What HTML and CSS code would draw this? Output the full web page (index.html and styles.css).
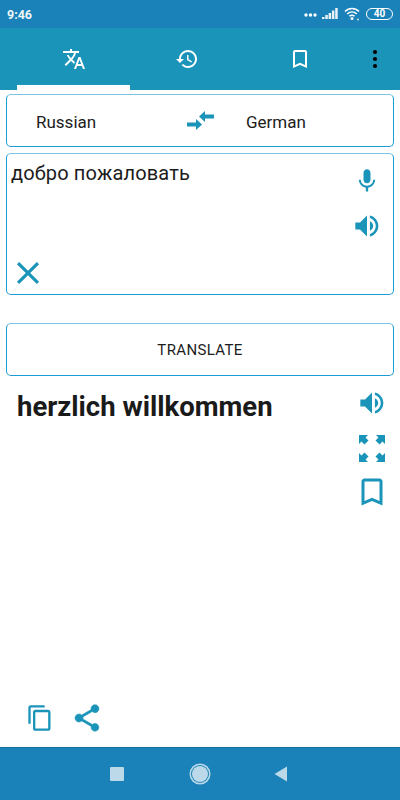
FILE: index.html
```html
<!DOCTYPE html>
<html lang="en">
<head>
<meta charset="utf-8">
<title>Translator</title>
<link rel="stylesheet" href="styles.css">
</head>
<body>
<div class="app">
  <div class="status">
    <span class="time">9:46</span>
    <div class="status-icons">
      <svg class="dots" width="13" height="4" viewBox="0 0 13 4"><circle cx="2" cy="2" r="1.7"/><circle cx="6.5" cy="2" r="1.7"/><circle cx="11" cy="2" r="1.7"/></svg>
      <svg class="signal" width="16" height="12" viewBox="0 0 16 12"><rect x="0" y="9" width="2.500" height="2"/><rect x="3.300" y="7" width="2.500" height="4"/><rect x="6.600" y="5" width="2.500" height="6"/><rect x="9.900" y="2.500" width="2.500" height="8.500"/><rect x="13.200" y="0" width="2.500" height="11"/></svg>
      <svg class="wifi" width="16" height="14" viewBox="0 0 16 14"><path d="M1 4.5C5 .5 11 .5 15 4.500M3.200 7C6 4.300 10 4.300 12.800 7M5.400 9.300C6.900 8 9.100 8 10.600 9.300" fill="none" stroke="#fff" stroke-width="1.500"/><circle cx="8" cy="11.500" r="1.500" fill="#fff"/><circle cx="14" cy="12.500" r="1" fill="#cfe6f2"/></svg>
      <div class="battery">40</div>
    </div>
  </div>

  <div class="toolbar">
    <div class="tab tab-active">
      <svg class="ic-24" viewBox="0 0 24 24"><path fill="#fff" d="M12.870 15.070l-2.540-2.510.03-.03c1.740-1.940 2.980-4.170 3.710-6.530H17V4h-7V2H8v2H1v1.990h11.170C11.500 7.920 10.440 9.750 9 11.350 8.070 10.320 7.300 9.190 6.690 8h-2c.73 1.630 1.730 3.170 2.980 4.560l-5.090 5.020L4 19l5-5 3.110 3.110.76-2.040zM18.500 10h-2L12 22h2l1.120-3h4.750L21 22h2l-4.500-12zm-2.620 7l1.620-4.330L19.120 17h-3.240z"/></svg>
    </div>
    <div class="tab">
      <svg class="ic-24" viewBox="0 0 24 24"><path fill="#fff" d="M13 3c-4.970 0-9 4.030-9 9H1l3.890 3.890.07.14L9 12H6c0-3.870 3.130-7 7-7s7 3.130 7 7-3.130 7-7 7c-1.930 0-3.680-.79-4.940-2.060l-1.420 1.420C8.270 19.990 10.510 21 13 21c4.970 0 9-4.030 9-9s-4.030-9-9-9zm-1 5v5l4.280 2.540.72-1.210-3.500-2.080V8H12z"/></svg>
    </div>
    <div class="tab">
      <svg class="ic-24" viewBox="0 0 24 24"><path fill="#fff" d="M17 3H7c-1.100 0-1.990.9-1.990 2L5 21l7-3 7 3V5c0-1.100-.9-2-2-2zm0 15l-5-2.180L7 18V5h10v13z"/></svg>
    </div>
    <div class="tab tab-more">
      <svg width="6" height="20" viewBox="0 0 6 20"><circle cx="3" cy="3" r="2.100"/><circle cx="3" cy="10" r="2.100"/><circle cx="3" cy="17" r="2.100"/></svg>
    </div>
  </div>

  <main class="content">
    <div class="panel lang-row">
      <span class="lang lang-from">Russian</span>
      <svg class="swap" width="28" height="20" viewBox="0 0 28 20"><path fill="#1a94b8" d="M0 10.500h9V7l6 5.500-1 1-5 4.500v-3.500H0zM27 2.500v4h-9V10l-6-5.500L18 -1v3.500z" transform="translate(0 1)"/></svg>
      <span class="lang lang-to">German</span>
    </div>

    <div class="panel input-panel">
      <div class="input-left">
        <div class="source">добро пожаловать</div>
        <svg class="ic-close" viewBox="0 0 24 24"><path fill="#1a94b8" d="M19 6.410L17.590 5 12 10.590 6.410 5 5 6.410 10.590 12 5 17.590 6.410 19 12 13.410 17.590 19 19 17.590 13.410 12z"/></svg>
      </div>
      <div class="input-right">
        <svg class="ic-28" viewBox="0 0 24 24"><path fill="#1a94b8" d="M12 14c1.660 0 2.990-1.340 2.990-3L15 5c0-1.660-1.340-3-3-3S9 3.340 9 5v6c0 1.660 1.340 3 3 3zm5.300-3c0 3-2.540 5.100-5.300 5.100S6.700 14 6.700 11H5c0 3.410 2.720 6.230 6 6.720V21h2v-3.280c3.280-.48 6-3.300 6-6.720h-1.700z"/></svg>
        <svg class="ic-28" viewBox="0 0 24 24"><path fill="#1a94b8" d="M2 9v6h4l6 6V3L6 9H2zm12.500-6v2.200C17.400 6.100 19.500 8.800 19.500 12s-2.100 5.900-5 6.800V21c4.100-.9 7.200-4.600 7.200-9s-3.100-8.100-7.200-9zm0 5v8c1.500-.7 2.800-2.200 2.800-4s-1.300-3.300-2.800-4z"/></svg>
      </div>
    </div>

    <div class="panel translate-btn">TRANSLATE</div>

    <section class="result">
      <div class="result-top">
        <div class="target">herzlich willkommen</div>
        <div class="result-icons">
          <svg class="ic-28" viewBox="0 0 24 24"><path fill="#1a94b8" d="M2 9v6h4l6 6V3L6 9H2zm12.500-6v2.200C17.400 6.100 19.500 8.800 19.500 12s-2.100 5.900-5 6.800V21c4.100-.9 7.200-4.600 7.200-9s-3.100-8.100-7.200-9zm0 5v8c1.500-.7 2.800-2.200 2.800-4s-1.300-3.300-2.800-4z"/></svg>
          <svg class="ic-full" viewBox="0 0 26 27"><path fill="#1a94b8" d="M0 0h9L6.500 2.500l3 3-4 4-3-3L0 9zM26 0v9l-2.500-2.500-3 3-4-4 3-3L17 0zM0 27v-9l2.500 2.500 3-3 4 4-3 3L9 27zM26 27h-9l2.500-2.500-3-3 4-4 3 3L26 18z"/></svg>
          <svg class="ic-36" viewBox="0 0 24 24"><path fill="#1a94b8" d="M17 3H7c-1.100 0-1.990.9-1.990 2L5 21l7-3 7 3V5c0-1.100-.9-2-2-2zm0 15l-5-2.180L7 18V5h10v13z"/></svg>
        </div>
      </div>
      <div class="actions">
        <svg class="ic-copy" viewBox="0 0 24 24"><path fill="#1a94b8" d="M16 1H4c-1.100 0-2 .9-2 2v14h2V3h12V1zm3 4H8c-1.100 0-2 .9-2 2v14c0 1.100.9 2 2 2h11c1.100 0 2-.9 2-2V7c0-1.100-.9-2-2-2zm0 16H8V7h11v14z"/></svg>
        <svg class="ic-share" viewBox="0 0 24 24"><path fill="#1a94b8" stroke="#1a94b8" stroke-width=".4" d="M18 16.080c-.76 0-1.440.3-1.960.77L8.910 12.700c.05-.23.09-.46.09-.7s-.04-.47-.09-.7l7.050-4.110c.54.5 1.250.81 2.040.81 1.660 0 3-1.340 3-3s-1.340-3-3-3-3 1.340-3 3c0 .24.04.47.09.7L8.040 9.810C7.500 9.310 6.790 9 6 9c-1.660 0-3 1.340-3 3s1.340 3 3 3c.79 0 1.500-.31 2.040-.81l7.120 4.160c-.05.21-.08.43-.08.65 0 1.610 1.310 2.920 2.920 2.920 1.610 0 2.920-1.310 2.920-2.920s-1.310-2.920-2.920-2.920z"/></svg>
      </div>
    </section>
  </main>

  <nav class="navbar">
    <div class="nav-square"></div>
    <div class="nav-circle"></div>
    <svg class="nav-back" width="14" height="16" viewBox="0 0 14 16"><path fill="#bcd9e9" d="M13 .5v15L.5 8z"/></svg>
  </nav>
</div>
</body>
</html>
```
FILE: styles.css
```css
* { box-sizing: border-box; }
html, body { margin: 0; padding: 0; background: #fff; }
body { font-family: Roboto, "Noto Sans", sans-serif; color: #1c1c1c; }
svg { display: block; flex: none; }

.app { width: 400px; height: 800px; display: flex; flex-direction: column; overflow: hidden; }

.status { height: 28px; background: #1a82b8; display: flex; align-items: center; justify-content: space-between; padding: 0 7px 0 7px; color: #fff; }
.time { font-size: 12.500px; font-weight: 700; color: #eef6fa; }
.status-icons { display: flex; align-items: center; }
.dots { fill: #fff; margin-right: 5px; margin-top: 2px; }
.signal { fill: #fff; opacity: .9; margin-right: 6px; }
.wifi { margin-right: 6px; }
.battery { width: 27px; height: 12px; border: 1px solid #fff; border-radius: 6px; font-size: 10px; font-weight: 700; line-height: 10px; text-align: center; color: #fff; }

.toolbar { height: 62px; background: #1a94b8; display: flex; padding-left: 17px; }
.tab { width: 113px; height: 62px; display: flex; align-items: center; justify-content: center; }
.tab-active { border-bottom: 5px solid #fff; padding-top: 5px; height: 62px; }
.tab-more { width: 38px; }
.ic-24 { width: 24px; height: 24px; }
.ic-28 { width: 28px; height: 28px; }
.ic-36 { width: 36px; height: 36px; }
.ic-full { width: 26px; height: 27px; }
.ic-close { width: 38px; height: 38px; }
.ic-copy { width: 28px; height: 28px; }
.ic-share { width: 32px; height: 32px; }

.content { flex: 1; display: flex; flex-direction: column; padding: 4px 6px 0; min-height: 0; }
.panel { border: 1px solid #1a9cd4; border-top-color: #7cc4e6; border-radius: 5px; background: #fff; }

.lang-row { height: 53px; display: flex; align-items: center; font-size: 17px; padding-left: 29px; padding-top: 3px; }
.lang-from { width: 151px; }
.swap { margin-right: 31px; margin-top: -3px; }

.input-panel { height: 142px; margin-top: 6px; display: flex; justify-content: space-between; }
.input-left { display: flex; flex-direction: column; justify-content: space-between; padding: 6px 0 2px 4px; }
.source { font-size: 20px; line-height: 27px; letter-spacing: .15px; }
.input-left .ic-close { margin-left: -2px; }
.input-right { display: flex; flex-direction: column; align-items: center; gap: 17px; padding: 13px 12px 0 0; }

.translate-btn { height: 53px; margin-top: 28px; display: flex; align-items: center; justify-content: center; font-size: 15px; font-weight: 400; letter-spacing: .35px; }

.result { flex: 1; display: flex; flex-direction: column; justify-content: space-between; min-height: 0; }
.result-top { display: flex; justify-content: space-between; }
.target { font-size: 27.500px; font-weight: 700; line-height: 36px; padding: 13px 0 0 11px; color: #1a1a1a; }
.result-icons { display: flex; flex-direction: column; align-items: center; padding: 13px 4px 0 0; }
.result-icons .ic-full { margin-top: 18px; }
.result-icons .ic-36 { margin-top: 12px; }
.actions { display: flex; align-items: center; gap: 17px; padding: 0 0 13px 20px; }

.navbar { height: 53px; background: #1a82b8; border-top: 1px solid #176fa0; display: flex; align-items: center; padding-left: 110px; }
.nav-square { width: 14px; height: 14px; background: #bcd9e9; border-radius: 1px; }
.nav-circle { width: 16px; height: 16px; margin-left: 68px; border-radius: 50%; background: #bcd9e9; box-shadow: 0 0 0 1px #1a82b8, 0 0 0 2.500px #bcd9e9; }
.nav-back { margin-left: 66px; }
```
